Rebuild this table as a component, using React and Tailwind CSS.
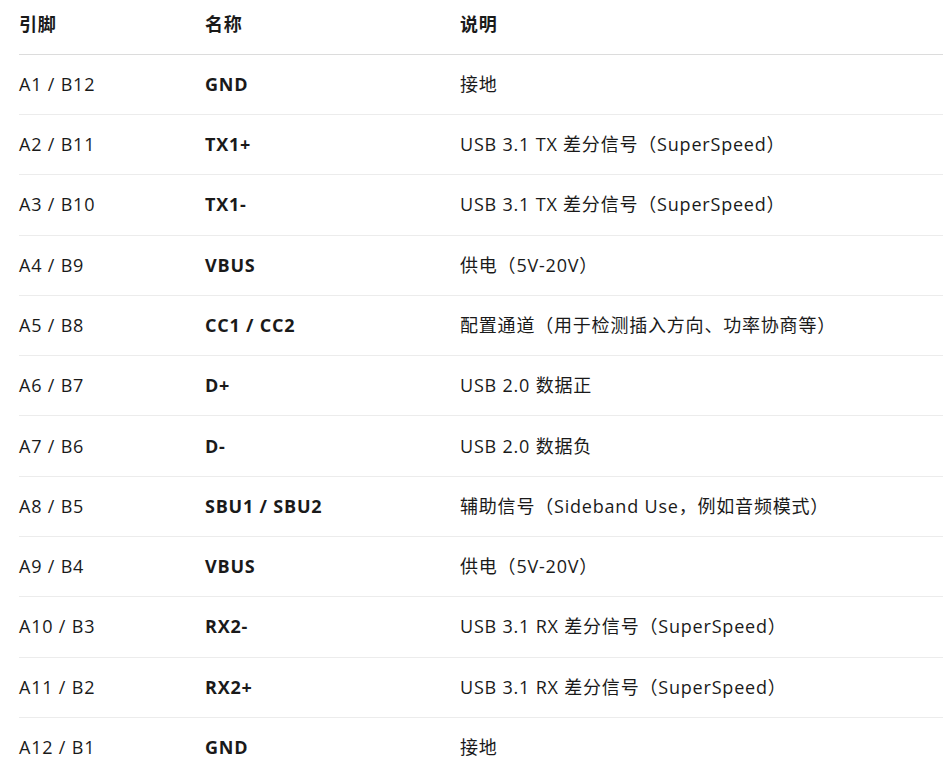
const pins = [
  ['A1 / B12', 'GND', '接地'],
  ['A2 / B11', 'TX1+', 'USB 3.1 TX 差分信号（SuperSpeed）'],
  ['A3 / B10', 'TX1-', 'USB 3.1 TX 差分信号（SuperSpeed）'],
  ['A4 / B9', 'VBUS', '供电（5V-20V）'],
  ['A5 / B8', 'CC1 / CC2', '配置通道（用于检测插入方向、功率协商等）'],
  ['A6 / B7', 'D+', 'USB 2.0 数据正'],
  ['A7 / B6', 'D-', 'USB 2.0 数据负'],
  ['A8 / B5', 'SBU1 / SBU2', '辅助信号（Sideband Use，例如音频模式）'],
  ['A9 / B4', 'VBUS', '供电（5V-20V）'],
  ['A10 / B3', 'RX2-', 'USB 3.1 RX 差分信号（SuperSpeed）'],
  ['A11 / B2', 'RX2+', 'USB 3.1 RX 差分信号（SuperSpeed）'],
  ['A12 / B1', 'GND', '接地'],
];

export default function App() {
  return (
    <div
      className="bg-white text-[#1a1a1a] text-[18px] tracking-[0.8px] pl-[19px] overflow-hidden h-[777px]"
      style={{ fontFamily: '"Open Sans", "Noto Sans CJK SC", sans-serif' }}
    >
      <div className="grid grid-cols-[186px_255px_1fr] h-[54.67px] items-center border-b border-[#dcdcdc] font-bold pb-[5px]">
        <div>引脚</div>
        <div>名称</div>
        <div>说明</div>
      </div>
      {pins.map(([pin, name, desc], i) => (
        <div
          key={i}
          className="grid grid-cols-[186px_255px_1fr] h-[60.3px] items-center border-b border-[#ececec]"
        >
          <div>{pin}</div>
          <div className="font-bold">{name}</div>
          <div>{desc}</div>
        </div>
      ))}
    </div>
  );
}
